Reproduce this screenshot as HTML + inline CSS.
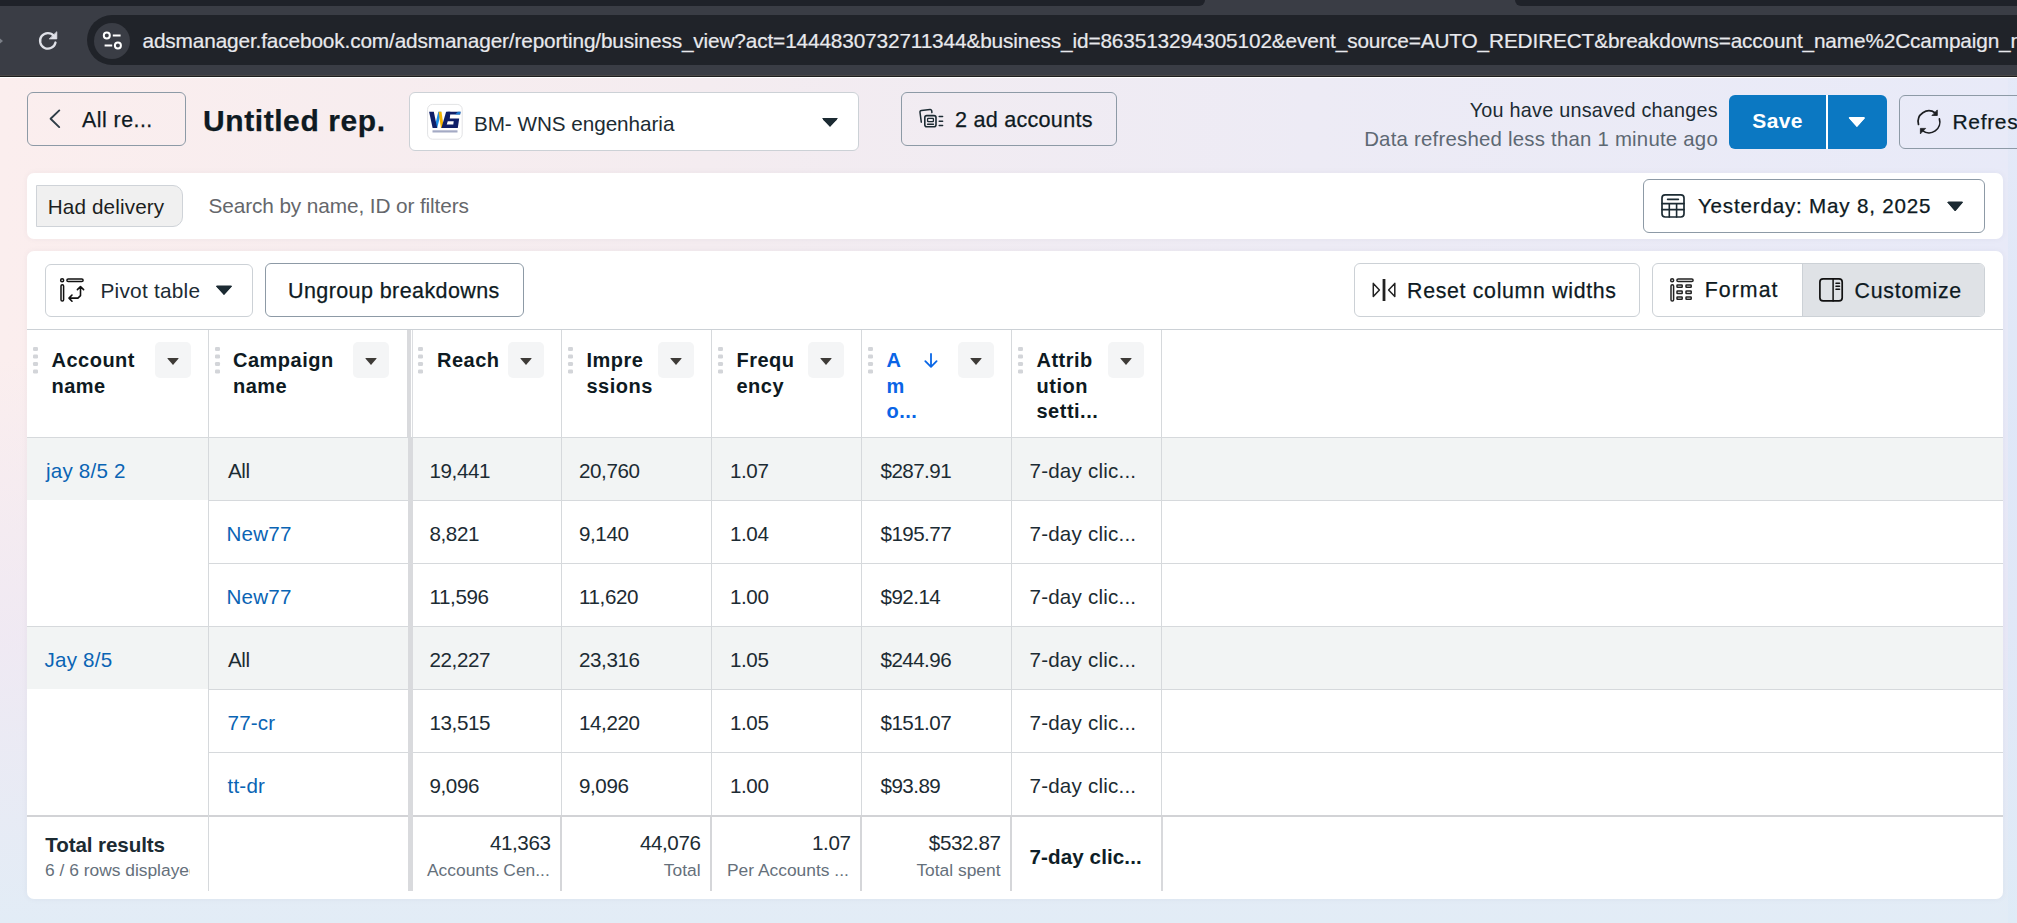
<!DOCTYPE html>
<html><head><meta charset="utf-8">
<style>
*{box-sizing:border-box;margin:0;padding:0}
html,body{width:2017px;height:923px;overflow:hidden}
body{position:relative;font-family:"Liberation Sans",sans-serif;color:#1c2b33;background:#e3ecf6}
.a{position:absolute}
.t{position:absolute;white-space:nowrap;line-height:1}
.op{color:#0e1a22;-webkit-text-stroke:.25px #0e1a22}
#chrome{left:0;top:0;width:2017px;height:78px;background:#3a3d45}
#page{left:0;top:78px;width:2017px;height:845px;background:linear-gradient(to bottom,rgba(226,236,246,0) 0px,rgba(232,230,246,0) 280px,rgba(232,230,246,.6) 560px,#e2ecf6 845px),linear-gradient(to right,#fbeeee 0%,#f4ecf0 35%,#edebf5 65%,#e8eaf8 100%)}
.btn{position:absolute;border:1px solid #8d9aa6;border-radius:6px}
.card{position:absolute;background:#fff;border-radius:7px;box-shadow:0 0 6px rgba(60,60,80,.05)}
.tri{position:absolute;width:0;height:0;border-left:8px solid transparent;border-right:8px solid transparent;border-top:9px solid #1c2b33}
.vl{position:absolute;width:1px;background:#d6d9dc}
.hl{position:absolute;height:1px;background:#d6d9dc}
.hd{font-weight:700;font-size:20px;letter-spacing:.5px;color:#0e1a22}
.dd{position:absolute;width:36px;height:36px;background:#f4f5f6;border-radius:5px;top:342px}
.dd:after{content:"";position:absolute;left:11.5px;top:15.5px;border-left:6.5px solid transparent;border-right:6.5px solid transparent;border-top:7.5px solid #3e3b37;border-radius:1px}
.dots{position:absolute;top:347px;width:4.5px;height:4.3px;border-radius:1.3px;background:#d3d5d9;box-shadow:0 7.5px 0 #d3d5d9,0 15px 0 #d3d5d9,0 22.5px 0 #d3d5d9}
.c{font-size:20.6px;color:#1c2b33;letter-spacing:-.4px}
.lk{color:#0a64b4;letter-spacing:.2px}
.sub{font-size:17.4px;color:#65707b}
</style></head><body>
<div id="chrome" class="a">
  <div class="a" style="left:0;top:0;width:1205px;height:6px;background:#1f2229;border-bottom-right-radius:8px"></div>
  <div class="a" style="left:1515px;top:0;width:502px;height:6px;background:#1f2229;border-bottom-left-radius:8px"></div>
  <div class="a" style="left:0;top:75px;width:2017px;height:1px;background:#4a4848"></div>
  <div class="a" style="left:0;top:76px;width:2017px;height:1px;background:#1e1e1e"></div>
  <div class="a" style="left:0;top:77px;width:2017px;height:1px;background:#ffffff"></div>
  <div class="a" style="left:-2px;top:36.5px;width:0;height:0;border-top:4.5px solid transparent;border-bottom:4.5px solid transparent;border-left:5px solid #7b7f87"></div>
  <div class="a" style="left:87px;top:15px;width:2100px;height:50px;border-radius:25px;background:#202329"></div>
  <div class="a" style="left:94px;top:22.5px;width:36px;height:36px;border-radius:50%;background:#3a3d45"></div>
</div>
<div id="page" class="a"></div>
<div class="a" style="left:2008px;top:78px;width:9px;height:845px;background:linear-gradient(to bottom,rgba(215,228,247,.2),rgba(215,230,247,.55) 40%,rgba(220,234,247,.5))"></div>
<div class="t" id="url" style="left:142.5px;top:31px;font-size:20.8px;letter-spacing:-0.14px;color:#e8e9ed;-webkit-text-stroke:.2px #e8e9ed">adsmanager.facebook.com/adsmanager/reporting/business_view?act=1444830732711344&amp;business_id=863513294305102&amp;event_source=AUTO_REDIRECT&amp;breakdowns=account_name%2Ccampaign_name</div>

<!-- header -->
<div class="btn" style="left:27px;top:92px;width:159px;height:54px"></div>
<div id="allre" class="t op" style="left:82px;top:109.6px;font-size:21.3px;letter-spacing:0.50px">All re...</div>
<div id="untitled" class="t op" style="left:203.0px;top:105.5px;font-size:30px;font-weight:700;letter-spacing:0.58px">Untitled rep.</div>
<div class="a" style="left:409px;top:92px;width:450px;height:59px;background:#fff;border:1px solid #ccd1d6;border-radius:6px"></div>
<div id="bm" class="t" style="left:473.9px;top:113.9px;font-size:20.7px;letter-spacing:-0.04px">BM- WNS engenharia</div>
<div class="tri" style="left:822px;top:118px"></div>
<div class="btn" style="left:901px;top:92px;width:216px;height:54px"></div>
<div id="adacc" class="t op" style="left:954.9px;top:108.5px;font-size:21.6px;letter-spacing:0.26px">2 ad accounts</div>
<div id="unsaved" class="t" style="left:1217.0px;width:501px;text-align:right;top:100.7px;font-size:19.8px;letter-spacing:0.25px">You have unsaved changes</div>
<div id="refreshed" class="t" style="left:1217.0px;width:501px;text-align:right;top:128.5px;font-size:20.4px;color:#5d6873;letter-spacing:0.22px">Data refreshed less than 1 minute ago</div>
<div class="a" style="left:1729px;top:95px;width:158px;height:54px;background:#0b78c2;border-radius:6px"></div>
<div class="a" style="left:1826px;top:95px;width:1.5px;height:54px;background:#fff"></div>
<div id="save" class="t" style="left:1752.3px;top:109.5px;font-size:21px;font-weight:700;color:#fff;letter-spacing:0.37px">Save</div>
<div class="tri" style="left:1849px;top:118px;border-top-color:#fff"></div>
<div class="btn" style="left:1899px;top:95px;width:200px;height:54px"></div>
<div id="refresh" class="t op" style="left:1952.4px;top:111.1px;font-size:21px;letter-spacing:.7px">Refresh</div>

<!-- filter card -->
<div class="card" style="left:27px;top:173px;width:1976px;height:66px"></div>
<div class="a" style="left:36px;top:185px;width:147px;height:42px;background:#f0f0f0;border:1px solid #dcdee1;border-radius:0 10px 10px 0;border-color:#cfd3d8"></div>
<div id="had" class="t" style="left:47.7px;top:197.4px;font-size:20.7px;color:#1c1e21;letter-spacing:0.14px">Had delivery</div>
<div id="search" class="t" style="left:208.5px;top:195.9px;font-size:20.8px;color:#65676b;letter-spacing:-0.11px">Search by name, ID or filters</div>
<div class="btn" style="left:1643px;top:179px;width:342px;height:54px"></div>
<div id="yest" class="t op" style="left:1697.9px;top:196.0px;font-size:20.6px;letter-spacing:0.81px">Yesterday: May 8, 2025</div>
<div class="tri" style="left:1947px;top:202px"></div>

<!-- table card -->
<div class="card" style="left:27px;top:251px;width:1976px;height:648px"></div>
<div class="btn" style="left:45px;top:264px;width:208px;height:53px;border-color:#ccd1d6"></div>
<div id="pivot" class="t" style="left:100.5px;top:281.4px;font-size:20.8px;letter-spacing:0.24px">Pivot table</div>
<div class="tri" style="left:216px;top:286px"></div>
<div class="btn" style="left:265px;top:263px;width:259px;height:54px"></div>
<div id="ungroup" class="t op" style="left:288.0px;top:280.9px;font-size:21.5px;letter-spacing:0.41px">Ungroup breakdowns</div>
<div class="btn" style="left:1354px;top:263px;width:286px;height:54px;border-color:#ccd1d6"></div>
<div id="reset" class="t op" style="left:1407.1px;top:281.3px;font-size:21.3px;letter-spacing:0.69px">Reset column widths</div>
<div class="btn" style="left:1652px;top:263px;width:333px;height:54px;border-color:#ccd1d6;overflow:hidden"><div class="a" style="left:149px;top:0;width:183px;height:52px;background:#dfe2e6;border-left:1px solid #ccd1d6"></div></div>
<div id="format" class="t op" style="left:1704.7px;top:280.3px;font-size:21.3px;letter-spacing:1.08px">Format</div>
<div id="custom" class="t op" style="left:1854.6px;top:281.3px;font-size:21.3px;letter-spacing:0.75px">Customize</div>

<!-- table grid -->
<div class="hl" style="left:27px;top:329px;width:1976px;background:#ccd1d6"></div>
<div class="hl" style="left:27px;top:437px;width:1976px"></div>
<div class="a" style="left:27px;top:438px;width:1976px;height:62px;background:#f2f4f4"></div>
<div class="a" style="left:27px;top:627px;width:1976px;height:62px;background:#f2f4f4"></div>
<div class="hl" style="left:208px;top:500px;width:1795px"></div>
<div class="hl" style="left:208px;top:563px;width:1795px"></div>
<div class="hl" style="left:27px;top:626px;width:1976px"></div>
<div class="hl" style="left:208px;top:689px;width:1795px"></div>
<div class="hl" style="left:208px;top:752px;width:1795px"></div>
<div class="hl" style="left:27px;top:815px;width:1976px;height:2px;background:#d2d3d6"></div>
<div class="vl" style="left:208px;top:330px;height:561px"></div>
<div class="a" style="left:407px;top:330px;width:4px;height:107px;background:#d9dadd"></div>
<div class="a" style="left:412px;top:330px;width:1px;height:107px;background:#dcdee1"></div>
<div class="a" style="left:408px;top:438px;width:5px;height:453px;background:#d9dadd"></div>
<div class="vl" style="left:561px;top:330px;height:485px"></div>
<div class="vl" style="left:711px;top:330px;height:485px"></div>
<div class="vl" style="left:861px;top:330px;height:485px"></div>
<div class="vl" style="left:1011px;top:330px;height:485px"></div>
<div class="vl" style="left:1161px;top:330px;height:485px"></div>
<div class="a" style="left:560px;top:817px;width:2px;height:74px;background:#d5d6d9"></div>
<div class="a" style="left:710px;top:817px;width:2px;height:74px;background:#d5d6d9"></div>
<div class="a" style="left:860px;top:817px;width:2px;height:74px;background:#d5d6d9"></div>
<div class="a" style="left:1010px;top:817px;width:2px;height:74px;background:#d5d6d9"></div>
<div class="a" style="left:1161px;top:817px;width:1.5px;height:74px;background:#d8d9dc"></div>

<!-- header cells -->
<div class="dots" style="left:33.3px"></div>
<div id="h1" class="t hd" style="left:51.5px;top:348.2px;line-height:25.4px">Account<br>name</div>
<div class="dd" style="left:155px"></div>
<div class="dots" style="left:215px"></div>
<div id="h2" class="t hd" style="left:233px;top:348.2px;line-height:25.4px">Campaign<br>name</div>
<div class="dd" style="left:353px"></div>
<div class="dots" style="left:418px"></div>
<div id="h3" class="t hd" style="left:437px;top:348.2px;line-height:25.4px">Reach</div>
<div class="dd" style="left:508px"></div>
<div class="dots" style="left:568px"></div>
<div class="t hd" style="left:586.5px;top:348.2px;line-height:25.4px">Impre<br>ssions</div>
<div class="dd" style="left:658px"></div>
<div class="dots" style="left:718px"></div>
<div class="t hd" style="left:736.5px;top:348.2px;line-height:25.4px">Frequ<br>ency</div>
<div class="dd" style="left:808px"></div>
<div class="dots" style="left:868px"></div>
<div id="h6" class="t hd" style="left:886.5px;top:348.2px;line-height:25.4px;color:#0a64e6">A<br>m<br>o...</div>
<div class="dd" style="left:958px"></div>
<div class="dots" style="left:1018px"></div>
<div id="h7" class="t hd" style="left:1036.5px;top:348.2px;line-height:25.4px">Attrib<br>ution<br>setti...</div>
<div class="dd" style="left:1108px"></div>

<!-- rows -->
<div id="r1a" class="t c lk" style="left:46px;top:460.5px">jay 8/5 2</div>
<div class="t c" style="left:228px;top:460.5px">All</div>
<div id="r1r" class="t c" style="left:429.5px;top:460.5px">19,441</div>
<div class="t c" style="left:579px;top:460.5px">20,760</div>
<div class="t c" style="left:730px;top:460.5px">1.07</div>
<div class="t c" style="left:880.5px;top:460.5px;letter-spacing:-.55px">$287.91</div>
<div class="t c" style="left:1029.5px;top:460.5px;letter-spacing:.2px">7-day clic...</div>

<div id="r2c" class="t c lk" style="left:226.5px;top:523.5px">New77</div>
<div class="t c" style="left:429.5px;top:523.5px">8,821</div>
<div class="t c" style="left:579px;top:523.5px">9,140</div>
<div class="t c" style="left:730px;top:523.5px">1.04</div>
<div class="t c" style="left:880.5px;top:523.5px;letter-spacing:-.55px">$195.77</div>
<div class="t c" style="left:1029.5px;top:523.5px;letter-spacing:.2px">7-day clic...</div>

<div class="t c lk" style="left:226.5px;top:586.5px">New77</div>
<div class="t c" style="left:429.5px;top:586.5px">11,596</div>
<div class="t c" style="left:579px;top:586.5px">11,620</div>
<div class="t c" style="left:730px;top:586.5px">1.00</div>
<div class="t c" style="left:880.5px;top:586.5px;letter-spacing:-.55px">$92.14</div>
<div class="t c" style="left:1029.5px;top:586.5px;letter-spacing:.2px">7-day clic...</div>

<div class="t c lk" style="left:44.5px;top:649.5px">Jay 8/5</div>
<div class="t c" style="left:228px;top:649.5px">All</div>
<div class="t c" style="left:429.5px;top:649.5px">22,227</div>
<div class="t c" style="left:579px;top:649.5px">23,316</div>
<div class="t c" style="left:730px;top:649.5px">1.05</div>
<div class="t c" style="left:880.5px;top:649.5px;letter-spacing:-.55px">$244.96</div>
<div class="t c" style="left:1029.5px;top:649.5px;letter-spacing:.2px">7-day clic...</div>

<div class="t c lk" style="left:227.5px;top:712.5px">77-cr</div>
<div class="t c" style="left:429.5px;top:712.5px">13,515</div>
<div class="t c" style="left:579px;top:712.5px">14,220</div>
<div class="t c" style="left:730px;top:712.5px">1.05</div>
<div class="t c" style="left:880.5px;top:712.5px;letter-spacing:-.55px">$151.07</div>
<div class="t c" style="left:1029.5px;top:712.5px;letter-spacing:.2px">7-day clic...</div>

<div class="t c lk" style="left:227.5px;top:775.5px">tt-dr</div>
<div class="t c" style="left:429.5px;top:775.5px">9,096</div>
<div class="t c" style="left:579px;top:775.5px">9,096</div>
<div class="t c" style="left:730px;top:775.5px">1.00</div>
<div class="t c" style="left:880.5px;top:775.5px;letter-spacing:-.55px">$93.89</div>
<div class="t c" style="left:1029.5px;top:775.5px;letter-spacing:.2px">7-day clic...</div>

<!-- totals -->
<div id="total" class="t" style="left:45.3px;top:834.5px;font-size:20.6px;font-weight:700;letter-spacing:-0.10px">Total results</div>
<div class="a" style="left:45px;top:858px;width:145px;height:24px;overflow:hidden"><div class="t sub" style="left:0;top:3.5px">6 / 6 rows displayed</div></div>
<div id="tr" class="t c" style="left:411px;width:139.5px;text-align:right;top:833px">41,363</div>
<div id="trs" class="t sub" style="left:427px;top:862px">Accounts Cen...</div>
<div class="t c" style="left:561px;width:139.5px;text-align:right;top:833px">44,076</div>
<div class="t sub" style="left:561px;width:139.5px;text-align:right;top:862px">Total</div>
<div class="t c" style="left:711px;width:139.5px;text-align:right;top:833px">1.07</div>
<div class="t sub" style="left:727px;top:862px">Per Accounts ...</div>
<div class="t c" style="left:861px;width:139.5px;text-align:right;top:833px">$532.87</div>
<div class="t sub" style="left:861px;width:139.5px;text-align:right;top:862px">Total spent</div>
<div class="t c" style="left:1029.5px;top:847px;font-weight:700;letter-spacing:.1px;color:#0e1e27">7-day clic...</div>


<!-- icons -->
<svg class="a" style="left:0;top:0" width="2017" height="923" viewBox="0 0 2017 923">
 <g fill="none" stroke-linecap="round" stroke-linejoin="round">
  <!-- reload -->
  <path d="M53.9 35.9A7.8 7.8 0 1 0 55.5 42.5" stroke="#dfe1e8" stroke-width="2.3"/>
  <path d="M49.6 38.9L56.8 38.9L56.8 32.1Z" fill="#dfe1e8" stroke="#dfe1e8" stroke-width="0.8"/>
  <!-- tune -->
  <circle cx="106.8" cy="35.5" r="3" stroke="#fff" stroke-width="2"/>
  <circle cx="117.9" cy="45.5" r="3" stroke="#fff" stroke-width="2"/>
  <path d="M112.8 35.5H120.6M104.6 45.5H112.2" stroke="#fff" stroke-width="2.2" stroke-linecap="butt"/>
  <!-- chevron -->
  <path d="M59.3 110.4L50.6 118.8L59.2 127.1" stroke="#2f3d47" stroke-width="1.9"/>
  <!-- ad accounts icon -->
  <path d="M921.3 122.2L920 112.3Q919.8 110.6 921.5 110.4L930 109.6Q931.7 109.5 931.8 111.2L931.9 112.6" stroke="#1c2b33" stroke-width="1.5"/>
  <rect x="924.8" y="115.6" width="11.2" height="11.2" rx="2" stroke="#1c2b33" stroke-width="1.6"/>
  <rect x="927.6" y="118.4" width="5.8" height="3.2" rx="0.6" stroke="#1c2b33" stroke-width="1.3"/>
  <path d="M927.6 124.3H933.4M939.2 116.6H942.6M939.2 121.2H942.6M939.2 125.6H942.6" stroke="#1c2b33" stroke-width="1.5"/>
  <!-- refresh -->
  <path d="M1918.5 124.5A10.8 10.8 0 0 1 1935.3 113" stroke="#1c1e21" stroke-width="1.7"/>
  <path d="M1939.4 118.9A10.8 10.8 0 0 1 1922.5 130.6" stroke="#1c1e21" stroke-width="1.7"/>
  <path d="M1937.3 110.3L1937.3 115.5L1932.3 115.5Z" fill="#1c1e21" stroke="#1c1e21" stroke-width="0.8"/>
  <path d="M1920.4 133.5L1920.4 128.4L1925.3 128.4Z" fill="#1c1e21" stroke="#1c1e21" stroke-width="0.8"/>
  <!-- calendar -->
  <rect x="1662" y="194.8" width="22" height="22.2" rx="3.2" stroke="#1c2b33" stroke-width="1.7"/>
  <path d="M1667.6 199.4H1678.4M1662 203.6H1684M1662 209.6H1684M1669.3 203.6V217M1676.6 203.6V217" stroke="#1c2b33" stroke-width="1.6"/>
  <!-- pivot -->
  <circle cx="62.15" cy="280.2" r="1.5" stroke="#111" stroke-width="1.5"/>
  <rect x="66.9" y="278.9" width="16.2" height="2.6" rx="1.3" stroke="#111" stroke-width="1.5"/>
  <rect x="61" y="284.8" width="2.6" height="16.3" rx="1.3" stroke="#111" stroke-width="1.5"/>
  <path d="M69.6 298.1H77.9L80.5 295.6V286.6M77.4 289.6L80.5 286.5L83.6 289.6M72 295L69 298.1L72 301.2" stroke="#111" stroke-width="1.6"/>
  <!-- reset col widths -->
  <path d="M1384 279V301" stroke="#222" stroke-width="2.8" stroke-linecap="butt"/>
  <path d="M1373.3 283.4V296.6L1379.4 290Z M1394.8 283.4V296.6L1388.6 290Z" stroke="#222" stroke-width="1.5"/>
  <!-- format -->
  <circle cx="1672.15" cy="280.2" r="1.5" stroke="#222" stroke-width="1.5"/>
  <rect x="1676.9" y="278.9" width="16.2" height="2.6" rx="1.3" stroke="#222" stroke-width="1.5"/>
  <rect x="1671" y="284.8" width="2.6" height="16.3" rx="1.3" stroke="#222" stroke-width="1.5"/>
  <g stroke="#222" stroke-width="1.5">
   <rect x="1677" y="284.9" width="5.2" height="2.4" rx="0.5"/><rect x="1686" y="284.9" width="5.2" height="2.4" rx="0.5"/>
   <rect x="1677" y="291" width="5.2" height="2.4" rx="0.5"/><rect x="1686" y="291" width="5.2" height="2.4" rx="0.5"/>
   <rect x="1677" y="296.9" width="5.2" height="2.4" rx="0.5"/><rect x="1686" y="296.9" width="5.2" height="2.4" rx="0.5"/>
  </g>
  <!-- customize -->
  <rect x="1819.9" y="278.8" width="22.3" height="22.1" rx="3.2" stroke="#111" stroke-width="1.7"/>
  <path d="M1833.1 278.8V300.9" stroke="#111" stroke-width="1.5"/>
  <path d="M1836 283.2H1839.5M1836 286.3H1839.5M1836 289.3H1839.5" stroke="#111" stroke-width="1.6"/>
  <!-- sort arrow -->
  <path d="M931 354V366.5M925.3 361.2L931 366.8L936.6 361.2" stroke="#0866e6" stroke-width="1.8"/>
 </g>
 <!-- carets -->
 <g stroke-linejoin="round" stroke-width="1.6">
  <path d="M823.8 119.3H836.1L830 125.2Z" fill="#1c2b33" stroke="#1c2b33"/>
  <path d="M1849.6 117.8H1864L1856.8 125.8Z" fill="#fff" stroke="#fff"/>
  <path d="M1948.5 202.3H1962L1955.2 210.2Z" fill="#1c2b33" stroke="#1c2b33"/>
  <path d="M217 286.3H231L224 293.8Z" fill="#1c2b33" stroke="#1c2b33"/>
 </g>
 <!-- logo -->
 <g>
  <rect x="427.6" y="104.4" width="34.6" height="34.8" rx="5" fill="#fff" stroke="#e2e3e5" stroke-width="1"/>
  <path d="M434.4 127.9H437.2L441.2 111.7H438.3Z" fill="#1e90e8"/>
  <path d="M429.1 111.7H433.8L437.2 127.9H432.6Z" fill="#0f1f68"/>
  <path d="M438.6 111.7H441.5L443.8 127.9H440.9Z" fill="#f4b400"/>
  <path d="M441.4 127.9H445.8L450.4 111.7H446.1Z" fill="#0f1f68"/>
  <path d="M447.5 111.7H460.6L460.1 114.6H450.2L449.8 118.4H459.2L457.8 127.9H444.6L445.1 124.4H453.3L453.7 121.2H446.7Z" fill="#0f1f68"/>
  <path d="M455 114.6H460.1L460.6 111.7H458Z" fill="#1e90e8" opacity=".8"/>
  <rect x="432.5" y="130.3" width="25" height="2.2" fill="#1b2a6b" opacity="0.4"/>
 </g>
</svg>
</body></html>
